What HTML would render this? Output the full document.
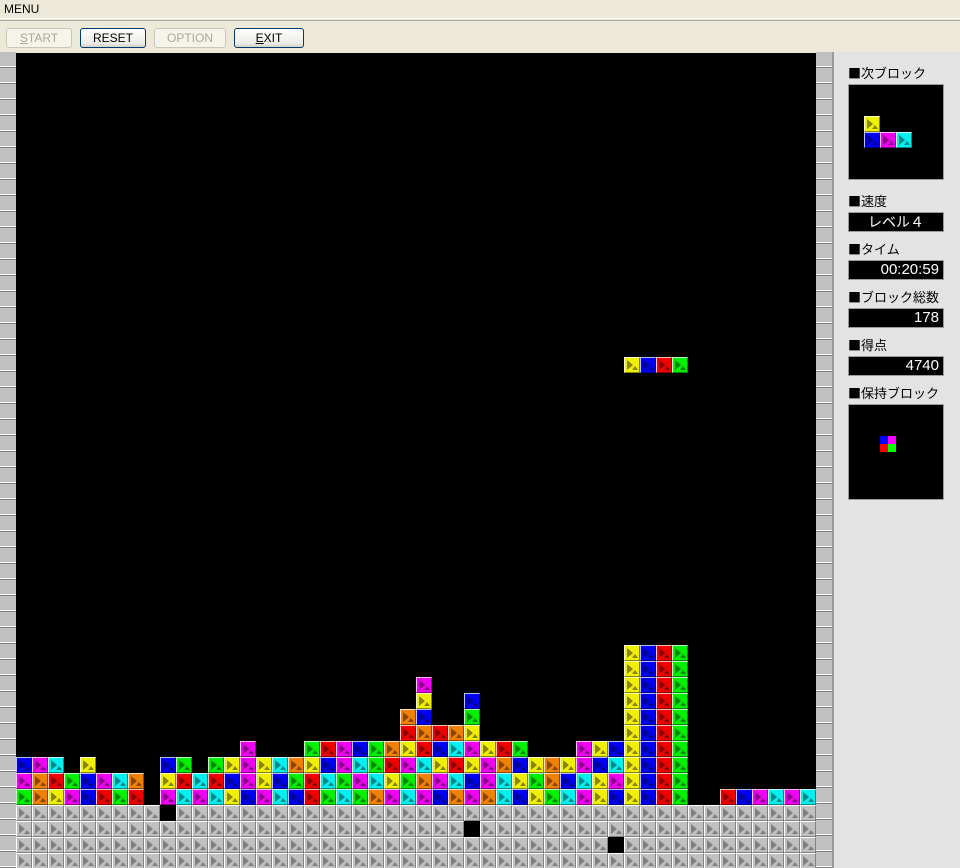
<!DOCTYPE html>
<html><head><meta charset="utf-8">
<style>
*{box-sizing:border-box;margin:0;padding:0}
body{width:960px;height:868px;overflow:hidden;background:#ece9d8;font-family:"Liberation Sans","Noto Sans CJK JP",sans-serif;position:relative}
#menu{position:absolute;left:0;top:0;width:960px;height:19px;font-size:12px;line-height:19px;padding-left:4px;color:#000;border-bottom:1px solid #fff}
#tool{position:absolute;left:0;top:20px;width:960px;height:32px;border-top:1px solid #aca899}
.btn{position:absolute;top:7px;height:20px;border:1px solid #003c74;border-radius:3px;background:linear-gradient(#fff,#ecebe6 80%,#d6d0c5);font-size:12px;text-align:center;line-height:18px;color:#000}
.btn.dis{border-color:#c9c7ba;color:#aca899;background:#f5f4ea}
#play{position:absolute;left:16px;top:53px;width:800px;height:815px;background:#000;overflow:hidden}
.side{position:absolute;top:52px;width:16px;height:816px;background:repeating-linear-gradient(#c0c0c0 0,#c0c0c0 14px,#fff 14px,#fff 15px,#808080 15px,#808080 16px)}
#panel{position:absolute;left:832px;top:52px;width:128px;height:816px;background:#e3e3e3;border-left:2px solid #9a9a9a}
.c{position:absolute;width:16px;height:16px;border-top:1px solid rgba(255,255,255,.75);border-left:1px solid rgba(255,255,255,.75);border-bottom:1px solid rgba(0,0,0,.45);border-right:1px solid rgba(0,0,0,.45)}
.c::before{content:"";position:absolute;left:2px;top:2px;border-left:6px solid rgba(0,0,0,.45);border-top:5px solid transparent;border-bottom:5px solid transparent}
.c::after{content:"";position:absolute;left:7px;top:8px;border-bottom:4px solid rgba(0,0,0,.45);border-left:3px solid transparent;border-right:3px solid transparent}
.B{background:#0000f0}.M{background:#f000f0}.C{background:#00f0f0}.Y{background:#f0f000}.O{background:#f08000}.R{background:#f00000}.G{background:#00f000}
.g{background:#c0c0c0;border-top-color:#fff;border-left-color:#fff;border-bottom-color:#808080;border-right-color:#808080}
.g::before{border-left-color:#808080}.g::after{border-bottom-color:#808080}
.lbl{position:absolute;left:14px;font-size:13px;color:#000;white-space:nowrap;font-family:"Noto Sans CJK JP",sans-serif;line-height:16px}
.box{position:absolute;left:14px;width:96px;background:#000;border:1px solid #999}
.val{height:20px;color:#fff;font-size:15px;line-height:18px;text-align:right;padding-right:4px}
</style></head><body>
<div id="menu">MENU</div>
<div id="tool">
<div class="btn dis" style="left:6px;width:66px"><u>S</u>TART</div>
<div class="btn" style="left:80px;width:66px">RESET</div>
<div class="btn dis" style="left:154px;width:72px">OPTION</div>
<div class="btn" style="left:234px;width:70px"><u>E</u>XIT</div>
</div>
<div class="side" style="left:0"></div>
<div id="play"></div>
<div class="side" style="left:816px"></div>
<div id="panel">
<div class="lbl" style="top:13px">■次ブロック</div>
<div class="box" id="next" style="top:32px;height:96px"></div>
<div class="lbl" style="top:141px">■速度</div>
<div class="box val" style="top:160px;text-align:center;padding:0;font-size:14px;font-family:'Noto Sans CJK JP',sans-serif">レベル４</div>
<div class="lbl" style="top:189px">■タイム</div>
<div class="box val" style="top:208px">00:20:59</div>
<div class="lbl" style="top:237px">■ブロック総数</div>
<div class="box val" style="top:256px">178</div>
<div class="lbl" style="top:285px">■得点</div>
<div class="box val" style="top:304px">4740</div>
<div class="lbl" style="top:333px">■保持ブロック</div>
<div class="box" style="top:352px;height:96px">
<div style="position:absolute;left:31px;top:31px;width:8px;height:8px;background:#00f"></div>
<div style="position:absolute;left:39px;top:31px;width:8px;height:8px;background:#f0f"></div>
<div style="position:absolute;left:31px;top:39px;width:8px;height:8px;background:#f00"></div>
<div style="position:absolute;left:39px;top:39px;width:8px;height:8px;background:#0f0"></div>
</div>
</div>
<script>
var D8="........",D13=".............";
var rows={
19:"......................................YBRG........",
37:D13+D13+"............Y"+"BRG"+D8,
38:D13+D13+"............Y"+"BRG"+D8,
39:D13+"............M"+"............Y"+"BRG"+D8,
40:D13+"............Y"+"..B.........Y"+"BRG"+D8,
41:D13+"...........OB"+"..G.........Y"+"BRG"+D8,
42:D13+"...........RO"+"ROY.........Y"+"BRG"+D8,
43:D13+".M...GRMBGOYR"+"BCMYRG...MYBY"+"BRG"+D8,
44:"BMC.Y....BG.G"+"YMYCOYBMCGRMC"+"YRYMOBYOYMBCY"+"BRG"+D8,
45:"MORGBMCO.YRCR"+"BMYBGRCGMCYGO"+"MCBMCYGOBCYMY"+"BRG"+D8,
46:"GOYMBRGR.MCMC"+"YBMCBRGCGOMCM"+"BOMOCBYGCMYBY"+"BRG"+"..RBMCMC"
};
function gr(h){var s="";for(var i=0;i<50;i++)s+=(i===h?".":"g");return s;}
rows[47]=gr(9);rows[48]=gr(28);rows[49]=gr(37);rows[50]=gr(-1);
var p=document.getElementById("play"),h="";
for(var r in rows){var s=rows[r];for(var i=0;i<s.length;i++){var ch=s[i];if(ch!==".")h+='<div class="c '+ch+'" style="left:'+(i*16)+'px;top:'+(r*16)+'px"></div>';}}
p.innerHTML=h;
document.getElementById("next").innerHTML='<div class="c Y" style="left:15px;top:31px"></div><div class="c B" style="left:15px;top:47px"></div><div class="c M" style="left:31px;top:47px"></div><div class="c C" style="left:47px;top:47px"></div>';
</script>
</body></html>
